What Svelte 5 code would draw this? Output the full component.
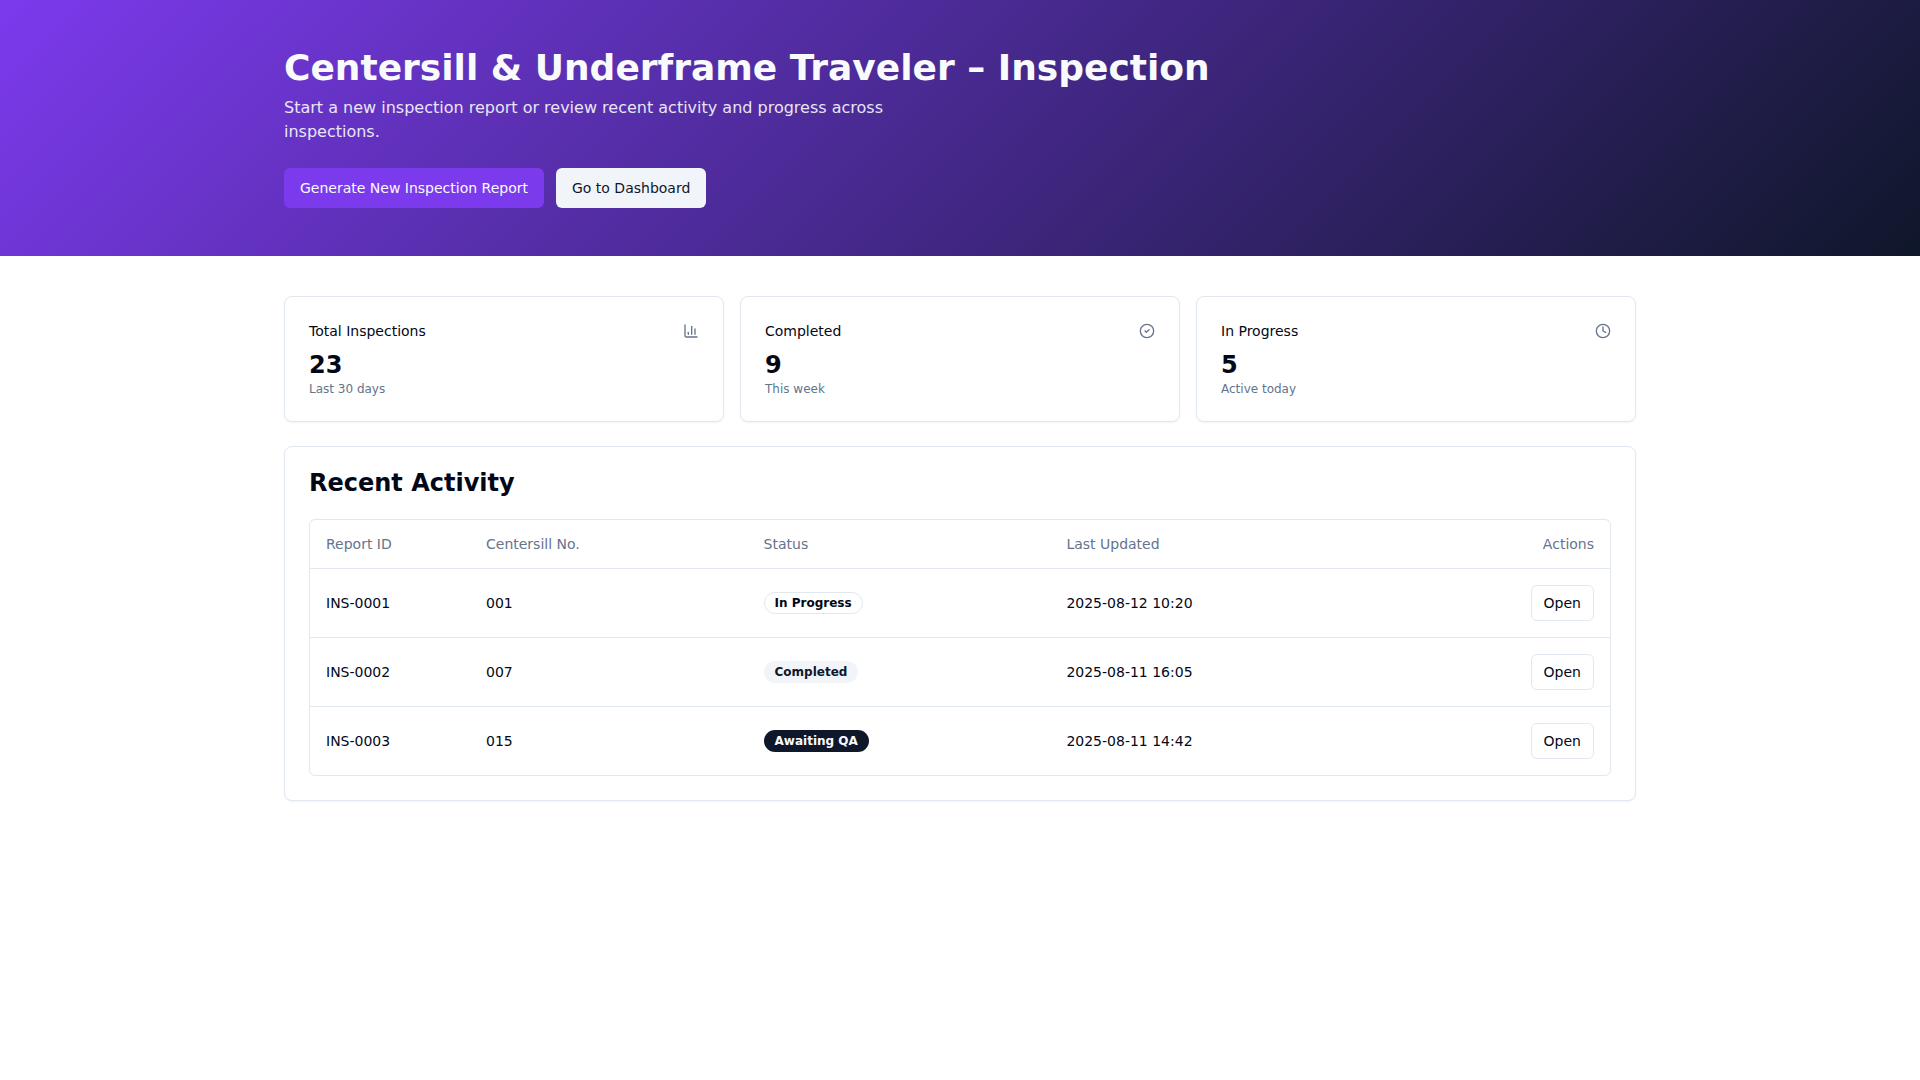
<script lang="ts">
  type Variant = "outline" | "secondary" | "default";

  interface Report {
    id: string;
    centersill: string;
    status: string;
    variant: Variant;
    updated: string;
  }

  const stats = [
    { label: "Total Inspections", value: 23, note: "Last 30 days", icon: "chart" },
    { label: "Completed", value: 9, note: "This week", icon: "check" },
    { label: "In Progress", value: 5, note: "Active today", icon: "clock" },
  ];

  const reports: Report[] = [
    { id: "INS-0001", centersill: "001", status: "In Progress", variant: "outline", updated: "2025-08-12 10:20" },
    { id: "INS-0002", centersill: "007", status: "Completed", variant: "secondary", updated: "2025-08-11 16:05" },
    { id: "INS-0003", centersill: "015", status: "Awaiting QA", variant: "default", updated: "2025-08-11 14:42" },
  ];
</script>

<header class="hero">
  <div class="container hero-inner">
    <h1>Centersill &amp; Underframe Traveler – Inspection</h1>
    <p>Start a new inspection report or review recent activity and progress across inspections.</p>
    <div class="hero-actions">
      <a class="btn btn-primary" href="#new-report">Generate New Inspection Report</a>
      <a class="btn btn-secondary" href="#dashboard">Go to Dashboard</a>
    </div>
  </div>
</header>

<main class="container content">
  <section class="stats" aria-label="Inspection totals">
    {#each stats as stat}
      <article class="card">
        <div class="stat-header">
          <h2 class="stat-label">{stat.label}</h2>
          <svg class="icon" viewBox="0 0 24 24" aria-hidden="true">
            {#if stat.icon === "chart"}
              <path d="M3 3v16a2 2 0 0 0 2 2h16" />
              <path d="M18 17V9" />
              <path d="M13 17V5" />
              <path d="M8 17v-3" />
            {:else if stat.icon === "check"}
              <circle cx="12" cy="12" r="10" />
              <path d="m9 12 2 2 4-4" />
            {:else}
              <circle cx="12" cy="12" r="10" />
              <polyline points="12 6 12 12 16 14" />
            {/if}
          </svg>
        </div>
        <div class="stat-value">{stat.value}</div>
        <p class="stat-note">{stat.note}</p>
      </article>
    {/each}
  </section>

  <section class="card" aria-labelledby="recent-title">
    <h2 class="section-title" id="recent-title">Recent Activity</h2>
    <div class="table-wrap">
      <table>
        <thead>
          <tr>
            <th class="col-id" scope="col">Report ID</th>
            <th scope="col">Centersill No.</th>
            <th scope="col">Status</th>
            <th scope="col">Last Updated</th>
            <th class="col-actions" scope="col">Actions</th>
          </tr>
        </thead>
        <tbody>
          {#each reports as report (report.id)}
            <tr>
              <td>{report.id}</td>
              <td>{report.centersill}</td>
              <td><div class="badge {report.variant}">{report.status}</div></td>
              <td>{report.updated}</td>
              <td class="col-actions">
                <button class="btn btn-outline" type="button" aria-label={`Open ${report.id}`}>Open</button>
              </td>
            </tr>
          {/each}
        </tbody>
      </table>
    </div>
  </section>
</main>

<style>
  :global(body) {
    margin: 0;
    background: #ffffff;
    color: #020817;
    font-family: "DejaVu Sans", sans-serif;
    font-size: 16px;
    line-height: 24px;
  }

  h1,
  h2,
  p {
    margin: 0;
  }

  .container {
    box-sizing: border-box;
    width: 100%;
    max-width: 1400px;
    margin: 0 auto;
    padding: 0 24px;
  }

  .hero {
    background: linear-gradient(135deg, #7c3aed, #0f172a);
    color: #f8fafc;
  }

  .hero-inner {
    padding-top: 48px;
    padding-bottom: 48px;
  }

  h1 {
    font-size: 36px;
    line-height: 40px;
    font-weight: 700;
  }

  .hero p {
    max-width: 672px;
    margin-top: 8px;
    opacity: 0.9;
  }

  .hero-actions {
    display: flex;
    flex-wrap: wrap;
    gap: 12px;
    margin-top: 24px;
  }

  .btn {
    display: inline-flex;
    align-items: center;
    justify-content: center;
    box-sizing: border-box;
    height: 40px;
    padding: 0 16px;
    border: 0;
    border-radius: 6px;
    font-family: inherit;
    font-size: 14px;
    line-height: 20px;
    font-weight: 500;
    text-decoration: none;
    white-space: nowrap;
    cursor: pointer;
  }

  .btn-primary {
    background: #7c3aed;
    color: #f8fafc;
  }

  .btn-secondary {
    background: #f1f5f9;
    color: #0f172a;
  }

  .btn-outline {
    height: 36px;
    padding: 0 12px;
    border: 1px solid #e2e8f0;
    background: #ffffff;
    color: #020817;
  }

  .btn-outline:hover {
    background: #f1f5f9;
  }

  .content {
    display: grid;
    gap: 24px;
    padding-top: 40px;
    padding-bottom: 40px;
  }

  .stats {
    display: grid;
    grid-template-columns: repeat(3, 1fr);
    gap: 16px;
  }

  .card {
    padding: 24px;
    border: 1px solid #e2e8f0;
    border-radius: 8px;
    background: #ffffff;
    box-shadow: 0 1px 2px rgba(0, 0, 0, 0.05);
  }

  .stat-header {
    display: flex;
    align-items: center;
    justify-content: space-between;
    padding-bottom: 8px;
  }

  .stat-label {
    font-size: 14px;
    line-height: 20px;
    font-weight: 500;
  }

  .icon {
    width: 16px;
    height: 16px;
    fill: none;
    stroke: #64748b;
    stroke-width: 2;
    stroke-linecap: round;
    stroke-linejoin: round;
  }

  .stat-value {
    font-size: 24px;
    line-height: 32px;
    font-weight: 700;
  }

  .stat-note {
    font-size: 12px;
    line-height: 16px;
    color: #64748b;
  }

  .section-title {
    margin-bottom: 24px;
    font-size: 24px;
    line-height: 24px;
    font-weight: 600;
  }

  .table-wrap {
    overflow: auto;
    border: 1px solid #e2e8f0;
    border-radius: 6px;
  }

  table {
    width: 100%;
    border-spacing: 0;
    font-size: 14px;
    line-height: 20px;
  }

  th {
    height: 48px;
    padding: 0 16px;
    border-bottom: 1px solid #e2e8f0;
    color: #64748b;
    font-weight: 500;
    text-align: left;
  }

  td {
    padding: 16px;
    border-bottom: 1px solid #e2e8f0;
  }

  tbody tr:last-child td {
    border-bottom: 0;
  }

  .col-id {
    box-sizing: border-box;
    width: 160px;
    height: 49px;
  }

  .col-actions {
    text-align: right;
  }

  .badge {
    display: inline-flex;
    align-items: center;
    padding: 2px 10px;
    border: 1px solid transparent;
    border-radius: 9999px;
    font-size: 12px;
    line-height: 16px;
    font-weight: 600;
  }

  .badge.outline {
    border-color: #e2e8f0;
  }

  .badge.secondary {
    background: #f1f5f9;
    color: #0f172a;
  }

  .badge.default {
    background: #0f172a;
    color: #f8fafc;
  }

  @media (max-width: 768px) {
    .stats {
      grid-template-columns: 1fr;
    }
  }
</style>
